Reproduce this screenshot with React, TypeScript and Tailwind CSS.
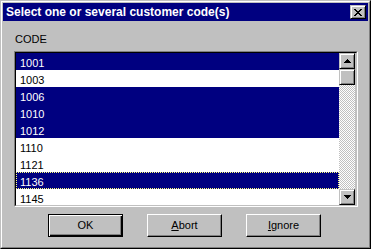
import React from "react";

const codes = [
  { code: "1001", selected: true },
  { code: "1003", selected: false },
  { code: "1006", selected: true },
  { code: "1010", selected: true },
  { code: "1012", selected: true },
  { code: "1110", selected: false },
  { code: "1121", selected: false },
  { code: "1136", selected: true, focused: true },
  { code: "1145", selected: false },
];

const raised =
  "border border-t-[#c0c0c0] border-l-[#c0c0c0] border-r-black border-b-black shadow-[inset_1px_1px_#fff,inset_-1px_-1px_#808080] bg-[#c0c0c0]";

function CloseGlyph() {
  const px = [
    [0, 0], [1, 0], [6, 0], [7, 0],
    [1, 1], [2, 1], [5, 1], [6, 1],
    [2, 2], [3, 2], [4, 2], [5, 2],
    [3, 3], [4, 3],
    [2, 4], [3, 4], [4, 4], [5, 4],
    [1, 5], [2, 5], [5, 5], [6, 5],
    [0, 6], [1, 6], [6, 6], [7, 6],
  ];
  return (
    <svg width="8" height="7" viewBox="0 0 8 7" shapeRendering="crispEdges">
      {px.map(([x, y]) => (
        <rect key={`${x}-${y}`} x={x} y={y} width="1" height="1" fill="#000" />
      ))}
    </svg>
  );
}

function Arrow({ down }: { down?: boolean }) {
  return (
    <svg width="7" height="4" viewBox="0 0 7 4" shapeRendering="crispEdges">
      {[0, 1, 2, 3].map((i) => {
        const w = down ? 7 - i * 2 : 1 + i * 2;
        return <rect key={i} x={(7 - w) / 2} y={i} width={w} height="1" fill="#000" />;
      })}
    </svg>
  );
}

function DialogButton({ children, isDefault }: { children: React.ReactNode; isDefault?: boolean }) {
  return (
    <button
      className={
        isDefault
          ? "w-[75px] h-[23px] border border-black bg-[#c0c0c0] shadow-[inset_1px_1px_#fff,inset_-1px_-1px_#000,inset_-2px_-2px_#808080] text-[11px] text-black leading-none"
          : "w-[75px] h-[23px] border border-t-white border-l-white border-r-black border-b-black bg-[#c0c0c0] shadow-[inset_-1px_-1px_#808080] text-[11px] text-black leading-none"
      }
    >
      {children}
    </button>
  );
}

export default function App() {
  return (
    <div className="w-[371px] h-[249px] border border-t-[#c0c0c0] border-l-[#c0c0c0] border-r-black border-b-black bg-[#c0c0c0] font-['Liberation_Sans',Arial,sans-serif] select-none">
      <div className="h-full border border-t-white border-l-white border-r-[#808080] border-b-[#808080] p-px flex flex-col">
        {/* title bar */}
        <div className="h-[18px] bg-[#000080] flex items-center justify-between pl-[3px] pr-[2px]">
          <span className="text-white font-bold text-[12px] leading-none">
            Select one or several customer code(s)
          </span>
          <div className={`w-[16px] h-[14px] flex items-center justify-center ${raised}`}>
            <CloseGlyph />
          </div>
        </div>

        <div className="flex-1 flex flex-col px-[11px]">
          <div className="mt-[12px] pl-px text-[11px] leading-[13px] text-black">CODE</div>

          {/* list box */}
          <div className="mt-[5px] w-[344px] h-[156px] border border-t-[#808080] border-l-[#808080] border-r-white border-b-white">
            <div className="h-full border border-t-black border-l-black border-r-[#c0c0c0] border-b-[#c0c0c0] flex">
              <div className="w-[323px] bg-white overflow-hidden">
                {codes.map((row) => (
                  <div
                    key={row.code}
                    className={
                      row.selected
                        ? `h-[17px] pl-[4px] pt-[3px] text-[11px] leading-[14px] bg-[#000080] text-white ${
                            row.focused ? "outline-1 outline-dotted outline-[#ffff7f] -outline-offset-1" : ""
                          }`
                        : "h-[17px] pl-[4px] pt-[3px] text-[11px] leading-[14px] bg-white text-black"
                    }
                  >
                    {row.code}
                  </div>
                ))}
              </div>

              {/* scrollbar */}
              <div className="w-[16px] flex flex-col">
                <div className={`h-[16px] flex items-center justify-center ${raised}`}>
                  <Arrow />
                </div>
                <div className="flex-1 flex flex-col bg-[conic-gradient(#fff_25%,#c0c0c0_0_50%,#fff_0_75%,#c0c0c0_0)] bg-[length:2px_2px]">
                  <div className={`h-[16px] ${raised}`} />
                </div>
                <div className={`h-[16px] flex items-center justify-center ${raised}`}>
                  <Arrow down />
                </div>
              </div>
            </div>
          </div>

          {/* buttons */}
          <div className="mt-[7px] pl-[34px] flex gap-[24px]">
            <DialogButton isDefault>OK</DialogButton>
            <DialogButton>
              <span className="underline">A</span>bort
            </DialogButton>
            <DialogButton>
              <span className="underline">I</span>gnore
            </DialogButton>
          </div>
        </div>
      </div>
    </div>
  );
}
